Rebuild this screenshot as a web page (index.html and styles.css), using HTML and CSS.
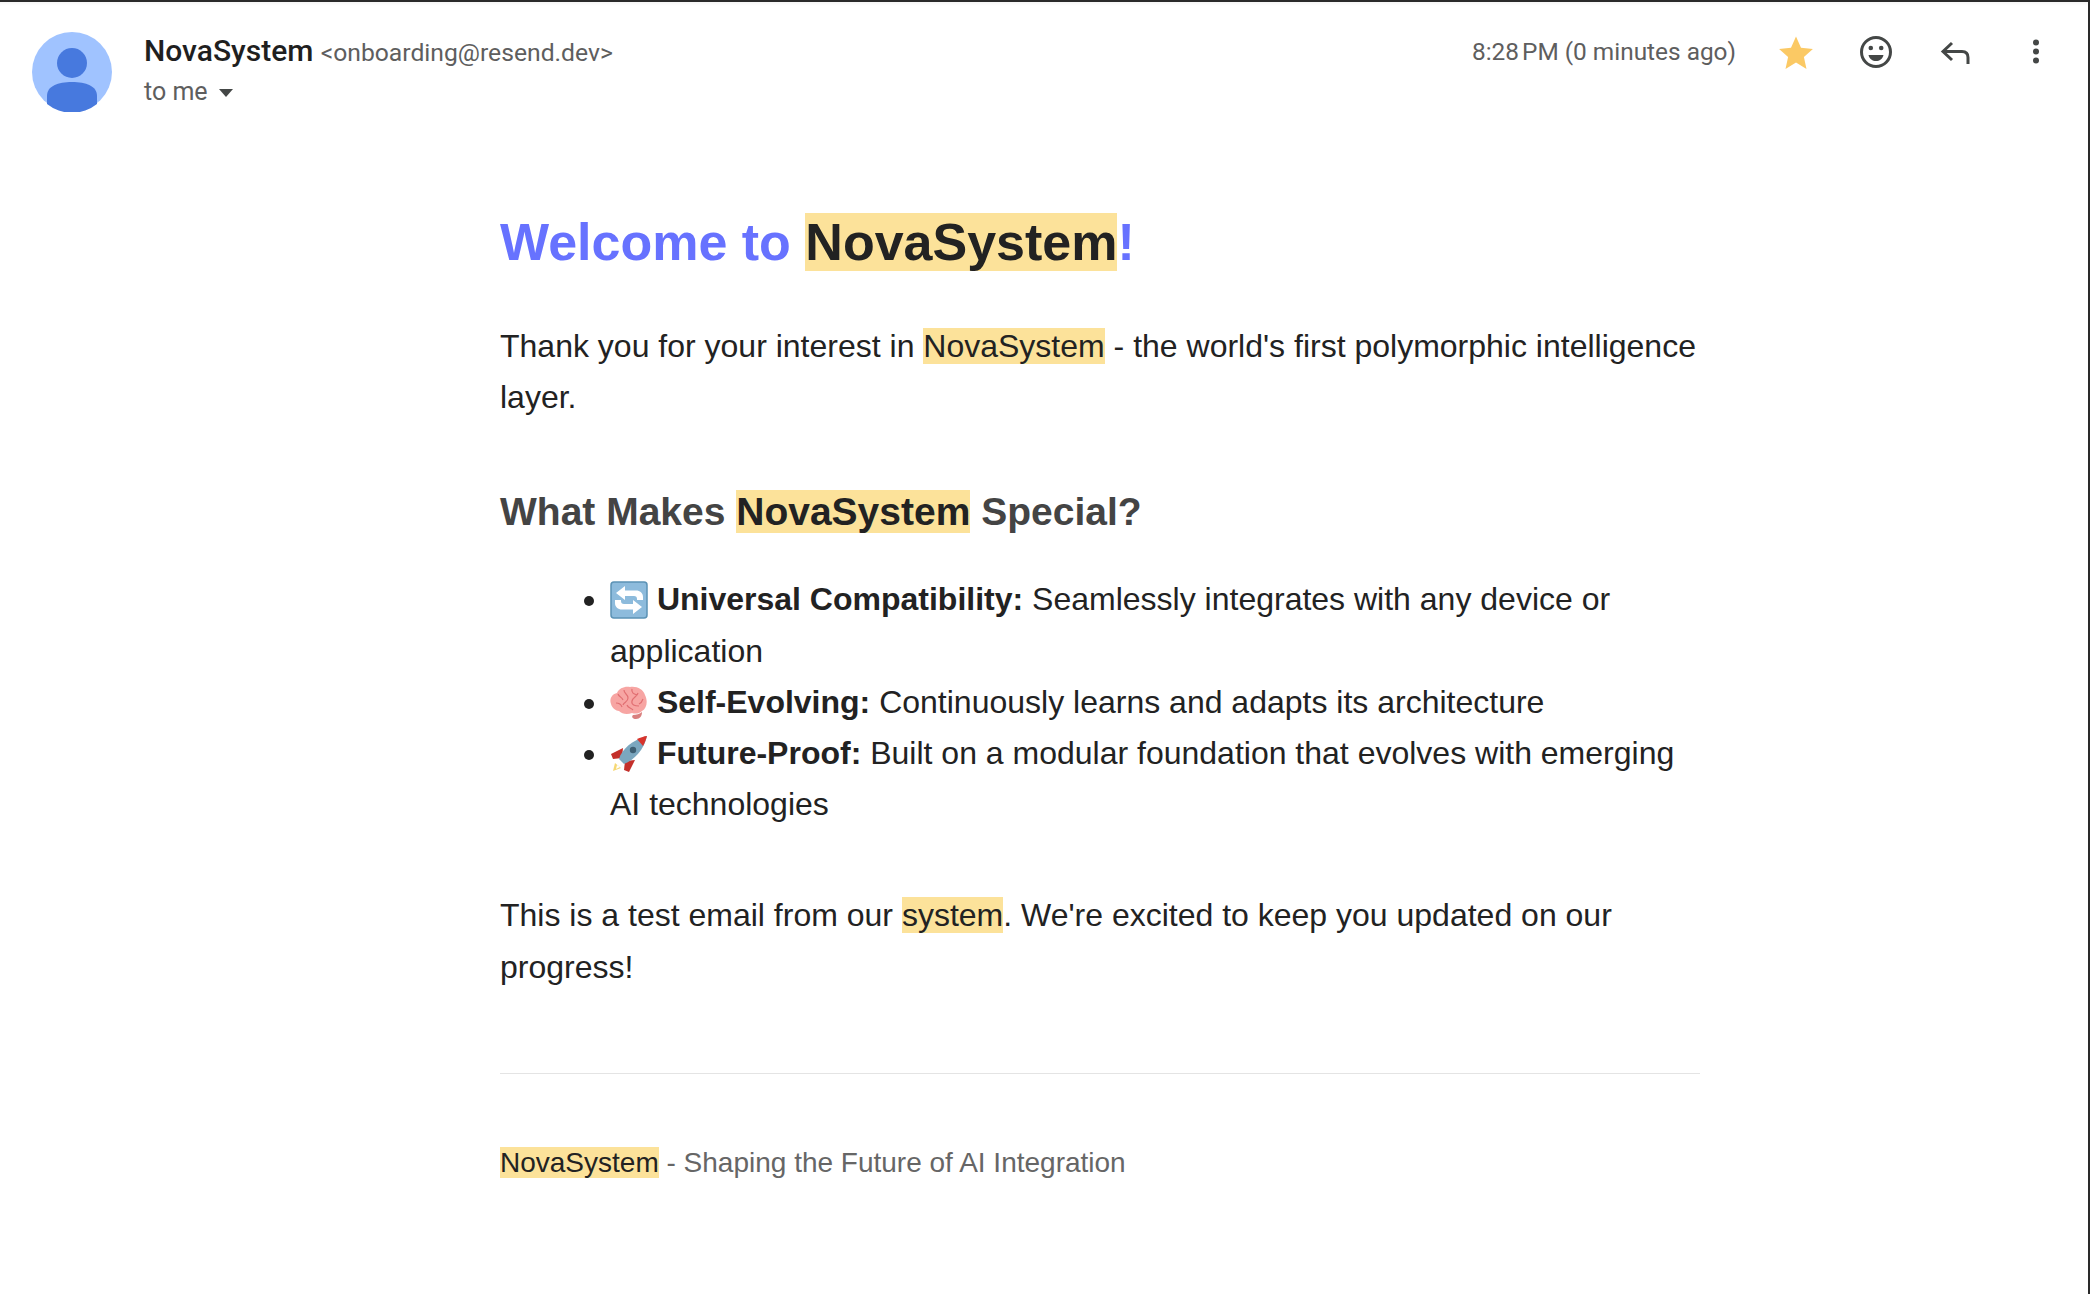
FILE: index.html
```html
<!DOCTYPE html>
<html>
  <head>
    <title>Welcome to NovaSystem</title>
    <link rel="stylesheet" href="styles.css">
  </head>
  <body>
    <div class="mail">

      <div class="mail-head">
        <svg class="avatar" viewBox="0 0 80 80">
          <circle cx="40" cy="40" r="40" fill="#a0c3ff"/>
          <ellipse cx="40" cy="31" rx="15" ry="15" fill="#4779de"/>
          <path d="M15 64c0-10 11-14 25-14s25 4 25 14v8a40 40 0 0 1-50 0z" fill="#4779de"/>
        </svg>
        <div class="sender">
          <div class="sender-line"><span class="sender-name">NovaSystem</span> <span class="sender-addr">&lt;onboarding@resend.dev&gt;</span></div>
          <div class="to-line">to me <span class="caret"></span></div>
        </div>
        <div class="time">8:28&#8239;PM (0 minutes ago)</div>
        <div class="actions">
          <svg class="icon" viewBox="0 0 40 40"><path d="M20 4.500l5 11.200 11.900 1.200-9 8 2.600 12L20 30.600 9.500 36.900l2.600-12-9-8 11.900-1.200z" fill="#fbc964"/></svg>
          <svg class="icon" viewBox="0 0 40 40" fill="none" stroke="#444746" stroke-width="3"><circle cx="20" cy="20" r="14.500"/><circle cx="14.800" cy="16" r="2.300" fill="#444746" stroke="none"/><circle cx="25.200" cy="16" r="2.300" fill="#444746" stroke="none"/><path d="M12.500 23h15c-1 4-4 6-7.500 6s-6.500-2-7.500-6z" fill="#444746" stroke="none"/></svg>
          <svg class="icon" viewBox="0 0 40 40" fill="none" stroke="#444746" stroke-width="3"><path d="M16 11l-9 8.500 9 8.500"/><path d="M7 19.500h19c4 0 6 2.500 6 6V32"/></svg>
          <svg class="icon" viewBox="0 0 40 40" fill="#444746"><circle cx="20" cy="10.500" r="3"/><circle cx="20" cy="19.500" r="3"/><circle cx="20" cy="28.500" r="3"/></svg>
        </div>
      </div>

      <div class="mail-body">
        <h1 class="title">Welcome to <mark>NovaSystem</mark>!</h1>
        <p>Thank you for your interest in <mark>NovaSystem</mark> - the world's first polymorphic intelligence layer.</p>

        <h2 class="subtitle">What Makes <mark>NovaSystem</mark> Special?</h2>
        <ul class="features">
          <li>
            <svg class="emoji" viewBox="0 0 38 38">
              <rect x="1" y="1" width="36" height="36" rx="3" fill="#8dbbdc"/>
              <rect x="1" y="1" width="36" height="36" rx="3" fill="none" stroke="#5b92b5" stroke-width="1.500"/>
              <path d="M15 5l-9 7 9 7v-4h9c2 0 3 1 3 3v1h6v-3c0-4-3-6.500-7-6.500H15z" fill="#fff"/>
              <path d="M23 33l9-7-9-7v4h-9c-2 0-3-1-3-3v-1H5v3c0 4 3 6.500 7 6.500h11z" fill="#fff"/>
            </svg>
            <b>Universal Compatibility:</b> Seamlessly integrates with any device or application
          </li>
          <li>
            <svg class="emoji" viewBox="0 0 38 38">
              <path d="M1 20c-2-5 1-10 6-11 2-5 8-7 13-6 7-1 13 2 15 8 3 6 2 13-3 16-3 3-7 3-10 2-5 2-10 1-13-2-3 0-7-3-8-7z" fill="#f7a5a3"/>
              <path d="M23 31c3 0 7-1 9-3 0 4-2 7-6 7-3 0-5-2-3-4z" fill="#d9807f"/>
              <path d="M8 10c1 3 4 3 5 6M14 6c0 4 4 4 4 8s-4 4-5 7M22 5c-1 4 2 5 5 6M28 9c-1 4-5 4-6 8s3 5 7 5M6 19c3 0 5 1 6 4M17 21c1 3 4 3 6 5M33 15c-1 3-2 4-4 5" fill="none" stroke="#e16f72" stroke-width="1.200"/>
            </svg>
            <b>Self-Evolving:</b> Continuously learns and adapts its architecture
          </li>
          <li>
            <svg class="emoji" viewBox="0 0 38 38">
              <path d="M3 36l2-8 6 5z" fill="#f6d873"/>
              <path d="M6 34l1-4 3 2z" fill="#fff"/>
              <path d="M13 13L1 19l2 5 9-1z" fill="#c4302b"/>
              <path d="M25 25L19 37l-5-2 1-9z" fill="#c4302b"/>
              <path d="M9 24C12 14 22 5 37 1c-3 14-13 24-23 28z" fill="#7ba7bf"/>
              <path d="M27 4c3-1 7-3 10-3-1 3-2 7-4 10z" fill="#d8342c"/>
              <circle cx="23" cy="15" r="3.200" fill="#3e5f73"/>
            </svg>
            <b>Future-Proof:</b> Built on a modular foundation that evolves with emerging AI technologies
          </li>
        </ul>

        <p class="closing">This is a test email from our <mark>system</mark>. We're excited to keep you updated on our progress!</p>

        <hr class="divider">
        <p class="footer"><mark>NovaSystem</mark> - Shaping the Future of AI Integration</p>
      </div>

    </div>
  </body>
</html>
```

FILE: styles.css
```css
html, body {
  margin: 0;
  height: 100%;
}

body {
  background-color: #ffffff;
  color: #222222;
  font-family: "Liberation Sans", Arial, sans-serif;
  overflow: hidden;
}

mark {
  background-color: #fce29a;
  color: #222222;
}

.mail {
  height: 100%;
  box-sizing: border-box;
  border-top: 2px solid #2a2a2a;
  border-right: 2px solid #2a2a2a;
  box-shadow: inset 0 5px 4px -4px rgba(0, 0, 0, 0.06);
}

.mail-head {
  display: flex;
  align-items: flex-start;
  padding: 30px 32px 0 32px;
}

.avatar {
  width: 80px;
  height: 80px;
  flex: none;
  margin-right: 32px;
}

.sender {
  flex: 1;
  font-family: Roboto, sans-serif;
  margin-top: -1px;
}

.sender-line {
  font-size: 25px;
  line-height: 40px;
}

.sender-name {
  font-size: 30px;
  font-weight: 500;
  color: #1f1f1f;
}

.sender-addr {
  font-size: 24.700px;
  color: #5e5e5e;
  margin-left: 1px;
}

.to-line {
  font-size: 25px;
  line-height: 40px;
  color: #5e5e5e;
  margin-top: -1px;
}

.caret {
  display: inline-block;
  margin-left: 5.500px;
  vertical-align: middle;
  border-top: 8px solid #444746;
  border-left: 7.500px solid transparent;
  border-right: 7.500px solid transparent;
}

.time {
  font-family: Roboto, sans-serif;
  font-size: 24.400px;
  line-height: 40px;
  color: #5e5e5e;
  margin-right: 40px;
}

.actions {
  display: flex;
  gap: 40px;
}

.icon {
  width: 40px;
  height: 40px;
}

.mail-body {
  width: 1200px;
  margin: 0 0 0 500px;
  padding-top: 98px;
  font-size: 32px;
  line-height: 51.2px;
}

.title {
  color: #6772ff;
  font-size: 52px;
  line-height: 64px;
  margin: 0 0 47px;
}

.mail-body p {
  margin: 0;
}

.subtitle {
  color: #444444;
  font-size: 39px;
  line-height: 48px;
  margin: 65px 0 38px;
}

.features {
  margin: 0;
  padding-left: 110px;
}

.emoji {
  width: 38px;
  height: 38px;
  vertical-align: -9px;
}

.closing {
  margin-top: 60px !important;
}

.divider {
  border: none;
  border-top: 1.300px solid #e4e4e4;
  margin: 80px 0 63px;
}

.footer {
  color: #666666;
  font-size: 28px;
}
```
